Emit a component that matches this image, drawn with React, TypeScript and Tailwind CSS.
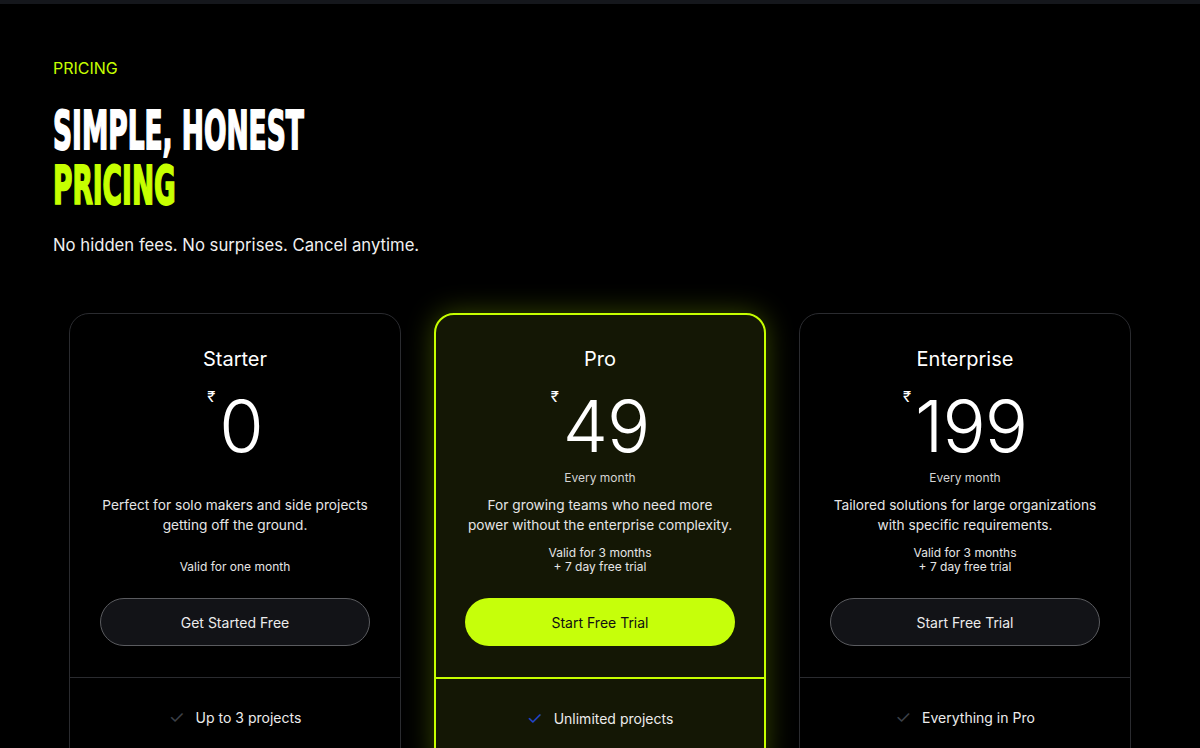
const plans = [
  {
    name: "Starter",
    price: "0",
    period: "",
    desc: ["Perfect for solo makers and side projects", "getting off the ground."],
    valid: ["Valid for one month"],
    cta: "Get Started Free",
    feature: "Up to 3 projects",
    featured: false,
  },
  {
    name: "Pro",
    price: "49",
    period: "Every month",
    desc: ["For growing teams who need more", "power without the enterprise complexity."],
    valid: ["Valid for 3 months", "+ 7 day free trial"],
    cta: "Start Free Trial",
    feature: "Unlimited projects",
    featured: true,
  },
  {
    name: "Enterprise",
    price: "199",
    period: "Every month",
    desc: ["Tailored solutions for large organizations", "with specific requirements."],
    valid: ["Valid for 3 months", "+ 7 day free trial"],
    cta: "Start Free Trial",
    feature: "Everything in Pro",
    featured: false,
  },
];

type Plan = (typeof plans)[number];

function PlanCard({ plan }: { plan: Plan }) {
  const hot = plan.featured;
  return (
    <div
      className={
        hot
          ? "overflow-hidden rounded-[20px] border-2 border-[#c6ff00] bg-[#141705] shadow-[0_0_28px_rgba(198,255,0,0.28)]"
          : "overflow-hidden rounded-[20px] border border-[#2a2b2f] bg-black"
      }
    >
      <div className={hot ? "flex flex-col items-center px-[29px] pt-[30px] pb-[31px]" : "flex flex-col items-center px-[30px] pt-[31px] pb-[31px]"}>
        <h3 className="text-[20px] leading-[28px] text-white">{plan.name}</h3>

        {/* price */}
        <div className="mt-[17px] flex items-start">
          <span className="mt-[-3px] mr-[4px] text-[15px] leading-[20px] text-white">₹</span>
          <span className="text-[72px] leading-[72px] font-light tracking-[-1px] text-white">
            {plan.price}
          </span>
        </div>
        <p className={plan.period ? "mt-[8px] text-[12px] leading-[16px] text-[#d4d4d4]" : "invisible mt-[8px] text-[12px] leading-[16px]"}>
          {plan.period || "Every month"}
        </p>

        <div className="mt-[9px] text-center text-[13.7px] leading-[20px] whitespace-nowrap text-[#e5e5e5]">
          {plan.desc.map((d) => (
            <p key={d}>{d}</p>
          ))}
        </div>

        <div className="mt-[9px] flex h-[30px] flex-col justify-end text-center text-[12px] leading-[14px] text-[#e5e5e5]">
          {plan.valid.map((v) => (
            <span key={v}>{v}</span>
          ))}
        </div>

        <button
          className={
            hot
              ? "mt-[24px] h-[48px] w-full rounded-full bg-[#c6ff0a] text-[14px] text-[#111]"
              : "mt-[24px] h-[48px] w-full rounded-full border border-[#5a5b5f] bg-[#121317] text-[14px] text-[#ececec]"
          }
        >
          {plan.cta}
        </button>
      </div>

      <div className={hot ? "border-t-2 border-[#c6ff00]" : "border-t border-[#2a2b2f]"}>
        <div className="flex items-center justify-center gap-[11px] pt-[28px] pb-[40px]">
          <span className={hot ? "text-[18px] leading-[24px] text-[#2346c9]" : "text-[18px] leading-[24px] text-[#3d4148]"}>✓</span>
          <span className="text-[14px] leading-[24px] text-[#ececec]">{plan.feature}</span>
        </div>
      </div>
    </div>
  );
}

export default function App() {
  return (
    <div
      className="h-[748px] overflow-hidden bg-black"
      style={{ fontFamily: "Inter, 'Noto Sans', sans-serif" }}
    >
      <div className="h-[4px] bg-[#15171c]" />

      <section className="px-[53px] pt-[54px]">
        <p className="text-[16px] leading-[20px] text-[#c6ff00]">PRICING</p>

        <h2
          className="mt-[25px] origin-left scale-x-[0.49] text-[54px] leading-[55px] font-bold whitespace-nowrap text-white"
          style={{
            fontFamily: "'DejaVu Sans', 'Liberation Sans', sans-serif",
            WebkitTextStroke: "2px currentColor",
          }}
        >
          SIMPLE, HONEST
          <br />
          <span className="text-[#c6ff00]">PRICING</span>
        </h2>

        <p className="mt-[20px] text-[16.7px] leading-[24px] text-[#f0f0f0]">
          No hidden fees. No surprises. Cancel anytime.
        </p>

        <div className="mt-[56px] grid grid-cols-3 gap-[33px] px-[16px]">
          {plans.map((p) => (
            <PlanCard key={p.name} plan={p} />
          ))}
        </div>
      </section>
    </div>
  );
}
